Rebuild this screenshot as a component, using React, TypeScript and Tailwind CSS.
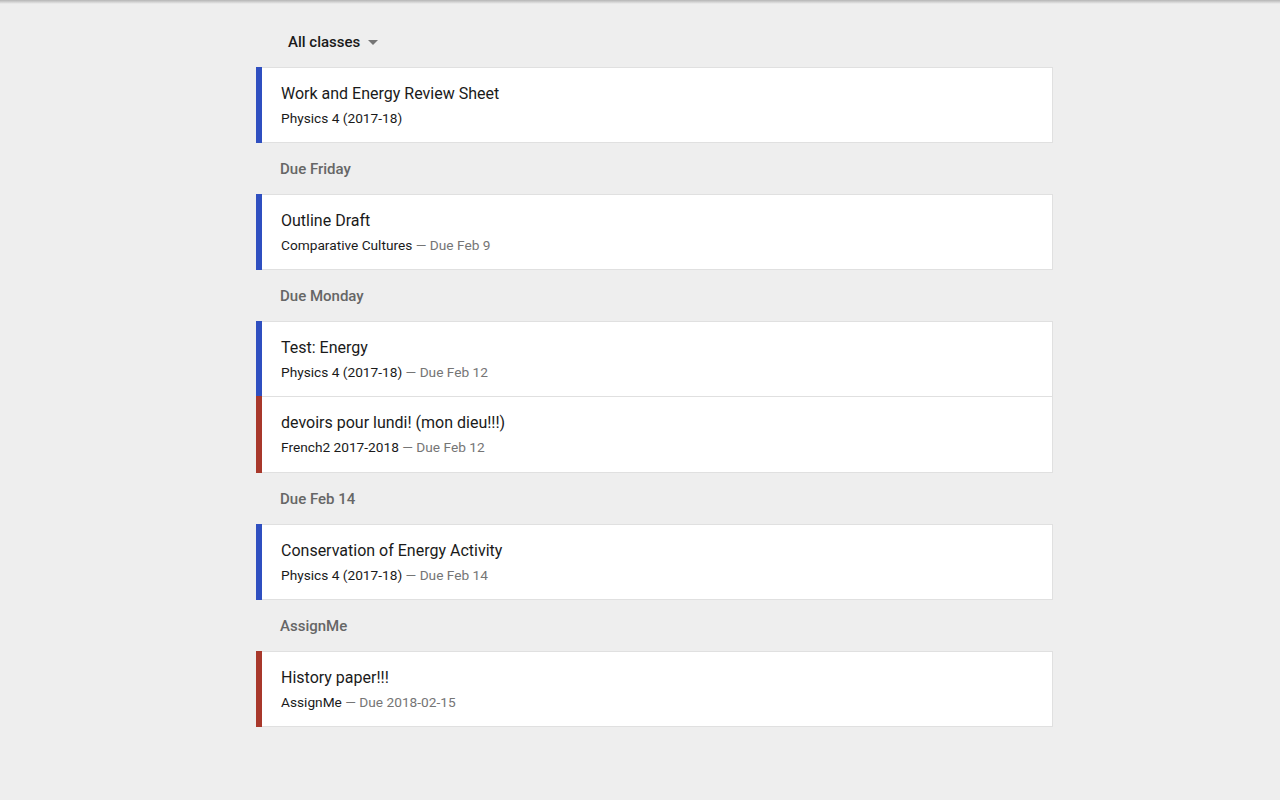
import React from "react";

type Item = { title: string; cls: string; due?: string; color: "blue" | "red" };
type Group = { header?: string; items: Item[] };

const groups: Group[] = [
  { items: [{ title: "Work and Energy Review Sheet", cls: "Physics 4 (2017-18)", color: "blue" }] },
  { header: "Due Friday", items: [{ title: "Outline Draft", cls: "Comparative Cultures", due: "Due Feb 9", color: "blue" }] },
  {
    header: "Due Monday",
    items: [
      { title: "Test: Energy", cls: "Physics 4 (2017-18)", due: "Due Feb 12", color: "blue" },
      { title: "devoirs pour lundi! (mon dieu!!!)", cls: "French2 2017-2018", due: "Due Feb 12", color: "red" },
    ],
  },
  { header: "Due Feb 14", items: [{ title: "Conservation of Energy Activity", cls: "Physics 4 (2017-18)", due: "Due Feb 14", color: "blue" }] },
  { header: "AssignMe", items: [{ title: "History paper!!!", cls: "AssignMe", due: "Due 2018-02-15", color: "red" }] },
];

function Card({ item, first }: { item: Item; first: boolean }) {
  return (
    <div
      className={`flex h-[76px] bg-white border border-[#e0e0e0] ${first ? "" : "border-t-0"}`}
    >
      <div className={`w-[6px] -my-px -ml-px ${item.color === "blue" ? "bg-[#2f4fc0]" : "bg-[#a8382b]"}`} />
      <div className="pl-[19px] pt-[15px]">
        <div className="text-[16px] leading-[22px] text-[#1a1a1a]">{item.title}</div>
        <div className="text-[13.7px] leading-[20px] mt-[3px] text-[#1a1a1a]">
          {item.cls}
          <span className="text-[#757575]">{item.due ? ` — ${item.due}` : ""}</span>
        </div>
      </div>
    </div>
  );
}

export default function App() {
  return (
    <div
      className="min-h-[800px] w-full bg-[#eeeeee] relative"
      style={{ fontFamily: "Roboto, 'Noto Sans', sans-serif" }}
    >
      <div className="absolute top-0 left-0 right-0 h-[4px] bg-gradient-to-b from-[#b5b5b5] to-[#eeeeee]" />
      <div className="w-[797px] ml-[256px] pt-[31px]">
        <div className="flex items-center h-[22px] pl-[32px] mb-[14px]">
          <span className="text-[15px] font-medium text-[#1a1a1a]">All classes</span>
          <svg width="10" height="5" viewBox="0 0 10 5" className="ml-[8px] mt-[1px]">
            <path d="M0 0 L10 0 L5 5 Z" fill="#757575" />
          </svg>
        </div>
        {groups.map((g, gi) => (
          <div key={gi}>
            {g.header && (
              <div className="h-[51px] flex items-center pl-[24px] pt-[2px] text-[15px] font-medium text-[#666666]">
                {g.header}
              </div>
            )}
            {g.items.map((it, ii) => (
              <Card key={ii} item={it} first={ii === 0} />
            ))}
          </div>
        ))}
      </div>
    </div>
  );
}
